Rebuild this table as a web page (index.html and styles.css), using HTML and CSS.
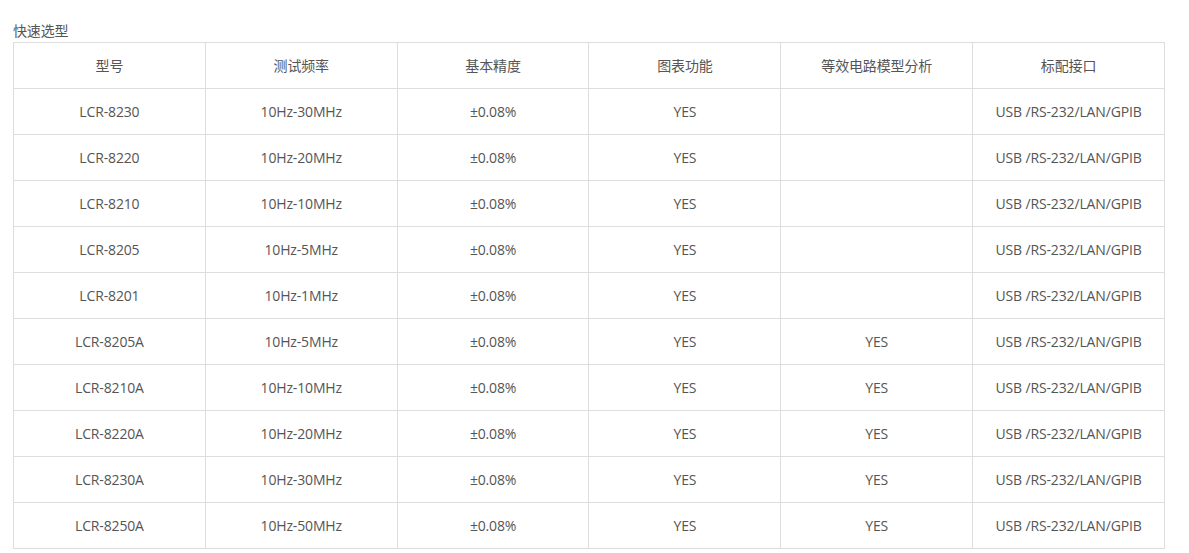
FILE: index.html
```html
<!DOCTYPE html>
<html lang="zh">
<head>
<meta charset="utf-8">
<link rel="stylesheet" href="styles.css">
</head>
<body>
<div class="page">
  <div class="title">快速选型</div>
  <table class="spec">
    <thead>
      <tr><th>型号</th><th>测试频率</th><th>基本精度</th><th>图表功能</th><th>等效电路模型分析</th><th>标配接口</th></tr>
    </thead>
    <tbody>
      <tr><td>LCR-8230</td><td>10Hz-30MHz</td><td>±0.08%</td><td>YES</td><td></td><td>USB /RS-232/LAN/GPIB</td></tr>
      <tr><td>LCR-8220</td><td>10Hz-20MHz</td><td>±0.08%</td><td>YES</td><td></td><td>USB /RS-232/LAN/GPIB</td></tr>
      <tr><td>LCR-8210</td><td>10Hz-10MHz</td><td>±0.08%</td><td>YES</td><td></td><td>USB /RS-232/LAN/GPIB</td></tr>
      <tr><td>LCR-8205</td><td>10Hz-5MHz</td><td>±0.08%</td><td>YES</td><td></td><td>USB /RS-232/LAN/GPIB</td></tr>
      <tr><td>LCR-8201</td><td>10Hz-1MHz</td><td>±0.08%</td><td>YES</td><td></td><td>USB /RS-232/LAN/GPIB</td></tr>
      <tr><td>LCR-8205A</td><td>10Hz-5MHz</td><td>±0.08%</td><td>YES</td><td>YES</td><td>USB /RS-232/LAN/GPIB</td></tr>
      <tr><td>LCR-8210A</td><td>10Hz-10MHz</td><td>±0.08%</td><td>YES</td><td>YES</td><td>USB /RS-232/LAN/GPIB</td></tr>
      <tr><td>LCR-8220A</td><td>10Hz-20MHz</td><td>±0.08%</td><td>YES</td><td>YES</td><td>USB /RS-232/LAN/GPIB</td></tr>
      <tr><td>LCR-8230A</td><td>10Hz-30MHz</td><td>±0.08%</td><td>YES</td><td>YES</td><td>USB /RS-232/LAN/GPIB</td></tr>
      <tr><td>LCR-8250A</td><td>10Hz-50MHz</td><td>±0.08%</td><td>YES</td><td>YES</td><td>USB /RS-232/LAN/GPIB</td></tr>
    </tbody>
  </table>
</div>
</body>
</html>
```
FILE: styles.css
```css
html, body {
  margin: 0;
  padding: 0;
  background: #fff;
}
body {
  font-family: "Open Sans", "Noto Sans CJK SC", sans-serif;
  font-size: 14px;
  letter-spacing: -0.15px;
  color: #555;
}
.page {
  padding: 22px 0 0 13px;
}
.title {
  line-height: 20px;
  height: 20px;
  margin-top: -1px;
  margin-bottom: 1px;
}
.spec {
  border-collapse: collapse;
  width: 1152px;
  table-layout: fixed;
}
.spec th,
.spec td {
  border: 1px solid #ddd;
  height: 45px;
  padding: 0;
  text-align: center;
  vertical-align: middle;
  font-weight: normal;
  line-height: 20px;
}
```
